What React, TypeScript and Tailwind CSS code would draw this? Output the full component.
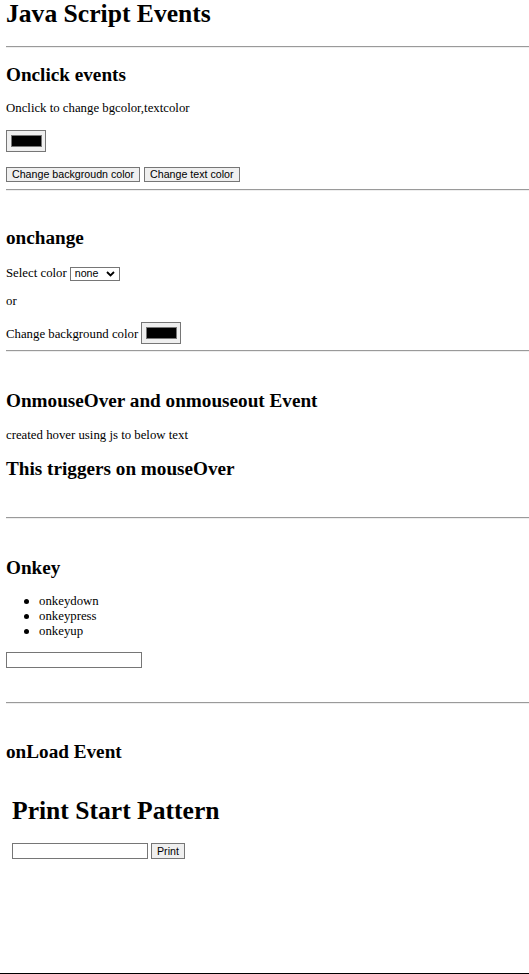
import React from "react";

const serif = "font-['Liberation_Serif','Times_New_Roman',serif]";
const sans = "font-['Liberation_Sans',Arial,sans-serif]";

function Rule({ className }: { className?: string }) {
  return <div className={"h-[2px] border-t border-t-[#9a9a9a] border-b border-b-[#eeeeee] " + (className ?? "")} />;
}

function ColorSwatch() {
  return (
    <div className="w-[40px] h-[22px] border border-[#767676] bg-[#efefef] flex items-center justify-center shrink-0">
      <div className="w-[31px] h-[12px] border border-[#777777] bg-black" />
    </div>
  );
}

function Btn({ children, className }: { children: React.ReactNode; className?: string }) {
  return (
    <button
      className={
        "h-[15px] px-[5px] border border-[#767676] bg-[#efefef] text-[10.67px] leading-[13px] text-black " +
        sans +
        " " +
        (className ?? "")
      }
    >
      {children}
    </button>
  );
}

export default function App() {
  return (
    <div className={"h-[974px] flex flex-col bg-white text-black border-b border-black " + serif}>
      <div className="flex-1 pl-[6px]">
        <h1 className="text-[25.6px] font-bold leading-[28px]">Java Script Events</h1>
        <Rule className="mt-[18px]" />

        {/* onclick */}
        <h2 className="mt-[15px] text-[19.2px] font-bold leading-[24px]">Onclick events</h2>
        <p className="mt-[14px] text-[12.8px] leading-[15px]">Onclick to change bgcolor,textcolor</p>
        <div className="mt-[14px]">
          <ColorSwatch />
        </div>
        <div className="mt-[15px] flex gap-[4px]">
          <Btn>Change backgroudn color</Btn>
          <Btn>Change text color</Btn>
        </div>
        <Rule className="mt-[7px]" />

        {/* onchange */}
        <h2 className="mt-[35px] text-[19.2px] font-bold leading-[24px]">onchange</h2>
        <div className="mt-[16px] flex items-center gap-[3px] text-[12.8px] leading-[15px] h-[15px]">
          <span>Select color</span>
          <div
            className={
              "h-[14px] w-[50px] border border-[#767676] flex items-center justify-between pl-[4px] pr-[4px] text-[10.67px] leading-[11px] " +
              sans
            }
          >
            <span>none</span>
            <svg width="9" height="6" viewBox="0 0 9 6">
              <path d="M1 1 L4.5 4.5 L8 1" fill="none" stroke="black" strokeWidth="1.8" />
            </svg>
          </div>
        </div>
        <p className="mt-[13px] text-[12.8px] leading-[15px]">or</p>
        <div className="mt-[13px] flex items-end gap-[3px]">
          <span className="text-[12.8px] leading-[15px] mb-[2px]">Change background color</span>
          <ColorSwatch />
        </div>
        <Rule className="mt-[6px]" />

        {/* mouse over */}
        <h2 className="mt-[37px] text-[19.2px] font-bold leading-[24px]">OnmouseOver and onmouseout Event</h2>
        <p className="mt-[15px] text-[12.8px] leading-[15px]">created hover using js to below text</p>
        <h3 className="mt-[14px] text-[19.2px] font-bold leading-[24px]">This triggers on mouseOver</h3>
        <Rule className="mt-[36px]" />

        {/* onkey */}
        <h2 className="mt-[37px] text-[19.2px] font-bold leading-[24px]">Onkey</h2>
        <ul className="mt-[14px] text-[12.8px] leading-[15px]">
          {["onkeydown", "onkeypress", "onkeyup"].map((item) => (
            <li key={item} className="flex items-center">
              <span className="ml-[18px] w-[5px] h-[5px] rounded-full bg-black" />
              <span className="ml-[10px]">{item}</span>
            </li>
          ))}
        </ul>
        <div className="mt-[13px] w-[136px] h-[16px] border border-[#767676] bg-white" />
        <Rule className="mt-[34px]" />

        {/* onload */}
        <h2 className="mt-[37px] text-[19.2px] font-bold leading-[22px]">onLoad Event</h2>
        <div className="ml-[6px]">
          <h1 className="mt-[34px] text-[25.6px] font-bold leading-[28px]">Print Start Pattern</h1>
          <div className="mt-[18px] flex gap-[3px]">
            <div className="w-[136px] h-[16px] border border-[#767676] bg-white" />
            <Btn className="px-[3px] h-[16px]">Print</Btn>
          </div>
        </div>
      </div>
    </div>
  );
}
